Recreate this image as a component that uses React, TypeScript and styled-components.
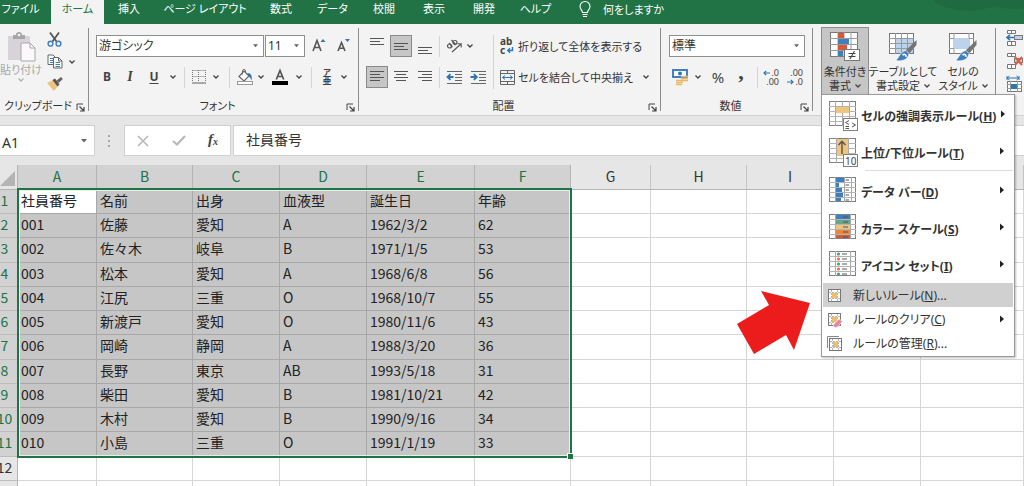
import React from "react";
import styled, { createGlobalStyle } from "styled-components";

const Global = createGlobalStyle`
  *, *::before, *::after { box-sizing: border-box; }
  html, body { margin: 0; padding: 0; }
  body {
    font-family: "Noto Sans", "Noto Sans CJK JP", sans-serif;
    font-feature-settings: "palt";
    font-size: 12px;
    color: #333;
  }
  button, input, select {
    font: inherit;
    font-feature-settings: inherit;
    color: inherit;
    margin: 0;
    padding: 0;
    border: 0;
    background: none;
    border-radius: 0;
  }
  svg { display: block; flex: none; overflow: visible; }
`;

/* ---------- page ---------- */

const Page = styled.div`
  display: flex;
  flex-direction: column;
  height: 100vh;
  overflow: hidden;
  background: #fff;
`;

/* ---------- tabs ---------- */

const TabBar = styled.nav`
  display: flex;
  flex: none;
  height: 24px;
  background: #217346;
  color: #fff;
  font-size: 11px;
`;

const Tab = styled.button<{ $w: number; $active?: boolean }>`
  flex: none;
  width: ${(p) => p.$w}px;
  height: 24px;
  padding-bottom: 6px;
  line-height: 18px;
  text-align: center;
  white-space: nowrap;
  background: ${(p) => (p.$active ? "#f3f3f3" : "transparent")};
  color: ${(p) => (p.$active ? "#217346" : "#fff")};
`;

const FileTab = styled(Tab)`
  padding-right: 10px;
`;

const TellMe = styled.button`
  display: flex;
  align-items: center;
  gap: 12px;
  height: 18px;
  margin-left: 17px;
  white-space: nowrap;
`;

const Swirl = styled.svg`
  margin-left: auto;
`;

/* ---------- ribbon ---------- */

const Ribbon = styled.div`
  display: flex;
  flex: none;
  height: 92px;
  padding-top: 4px;
  background: #f3f3f3;
  border-bottom: 1px solid #d2d2d2;
`;

const Group = styled.section<{ $w?: number }>`
  display: flex;
  flex-direction: column;
  flex: ${(p) => (p.$w ? `0 0 ${p.$w}px` : "1 1 0")};
  min-width: 0;
  height: 83px;
  border-right: ${(p) => (p.$w ? "1px solid #8c8c8c" : "0")};
`;

const Body = styled.div<{ $left: number }>`
  display: flex;
  height: 70px;
  padding: 7px 0 0 ${(p) => p.$left}px;
`;

const Caption = styled.div`
  display: flex;
  height: 13px;
  font-size: 11px;
  line-height: 16px;
  padding-right: 3px;
  white-space: nowrap;
`;

const CaptionText = styled.span`
  flex: 1;
  text-align: center;
`;

const Launcher = styled.button`
  width: 9px;
  height: 9px;
  margin-top: 5px;
`;

const Rows = styled.div`
  display: flex;
  flex-direction: column;
  gap: 9px;
`;

const Row = styled.div<{ $gap?: number }>`
  display: flex;
  align-items: center;
  gap: ${(p) => p.$gap ?? 0}px;
  height: 22px;
`;

const Tool = styled.button<{ $w?: number; $on?: boolean }>`
  display: flex;
  align-items: center;
  justify-content: center;
  flex: none;
  width: ${(p) => p.$w ?? 24}px;
  height: 22px;
  ${(p) =>
    p.$on &&
    `width: 22px; margin: 0 1px; background: #c6c6c6; border: 1px solid #8a8a8a;`}
`;

const Letter = styled.span<{ $italic?: boolean; $under?: boolean }>`
  font-weight: 700;
  font-size: ${(p) => (p.$italic ? 14 : 12)}px;
  line-height: 16px;
  color: #444;
  font-family: ${(p) => (p.$italic ? '"Liberation Serif", serif' : "inherit")};
  font-style: ${(p) => (p.$italic ? "italic" : "normal")};
  text-decoration: ${(p) => (p.$under ? "underline" : "none")};
  text-underline-offset: 2px;
`;

const Rule = styled.span<{ $w: number; $tall?: boolean }>`
  flex: none;
  width: ${(p) => p.$w}px;
  height: ${(p) => (p.$tall ? 54 : 21)}px;
  background: linear-gradient(#d4d4d4, #d4d4d4) center / 1px 100% no-repeat;
`;

const TextTool = styled.button`
  display: flex;
  align-items: center;
  gap: 3px;
  height: 22px;
  padding-left: 3px;
  font-size: 11px;
  white-space: nowrap;
`;

const PickerBox = styled.span<{ $w: number }>`
  position: relative;
  display: flex;
  align-items: center;
  width: ${(p) => p.$w}px;
  height: 22px;
  background: #fff;
  border: 1px solid #8f8f8f;
  select {
    appearance: none;
    width: 100%;
    height: 20px;
    padding-left: 2px;
    line-height: 20px;
    outline: 0;
  }
  svg {
    position: absolute;
    right: 5px;
    pointer-events: none;
  }
`;

const Paste = styled.button`
  display: flex;
  flex-direction: column;
  align-items: center;
  width: 44px;
  height: 62px;
  padding: 0 2px 0 0;
  color: #a8a8a8;
  font-size: 11px;
  line-height: 16px;
  white-space: nowrap;
`;

const PasteBody = styled(Body)`
  padding-top: 4px;
`;

const ClipTools = styled.div`
  display: flex;
  flex-direction: column;
  gap: 7px;
  padding-left: 3px;
`;

const ClipTool = styled.button`
  display: flex;
  align-items: center;
  gap: 6px;
  height: 15px;
`;

const StyleList = styled.div`
  display: flex;
  padding-left: 8px;
  gap: 2px;
`;

const MenuAnchor = styled.div`
  position: relative;
  margin-top: -1px;
`;

const BigButton = styled.button<{ $w: number; $open?: boolean }>`
  display: flex;
  flex-direction: column;
  align-items: center;
  width: ${(p) => p.$w}px;
  height: 68px;
  margin-top: ${(p) => (p.$open ? 0 : -1)}px;
  padding-top: 4px;
  border: 1px solid ${(p) => (p.$open ? "#8f8f8f" : "transparent")};
  background: ${(p) => (p.$open ? "#c6c6c6" : "transparent")};
  font-size: 11px;
  line-height: 14px;
  white-space: nowrap;
`;

const BigLabel = styled.span`
  display: flex;
  flex-direction: column;
  align-items: center;
  margin-top: 3px;
`;

const BigLine = styled.span`
  display: flex;
  align-items: center;
  gap: 4px;
`;

const CellTools = styled.div`
  display: flex;
  flex-direction: column;
  gap: 7px;
  padding: 2px 0 0 10px;
`;

/* ---------- drop-down menu ---------- */

const Menu = styled.ul`
  position: absolute;
  z-index: 3;
  top: 67px;
  left: 0;
  width: 194px;
  margin: 0;
  padding: 1px;
  list-style: none;
  background: #fff;
  border: 1px solid #9a9a9a;
  box-shadow: 1px 1px 2px rgba(0, 0, 0, 0.25);
`;

const Gallery = styled.button`
  display: flex;
  align-items: flex-start;
  width: 100%;
  height: 37px;
  padding: 5px 9px 0 6px;
  gap: 5px;
  font-weight: 700;
  line-height: 28px;
  text-align: left;
  white-space: nowrap;
  > span { flex: 1; padding-top: 2px; }
  > svg:last-child { margin-top: 9px; }
`;

const Command = styled.button<{ $hot?: boolean }>`
  display: flex;
  align-items: center;
  gap: 11px;
  width: 100%;
  height: 24px;
  padding: 0 9px 0 4px;
  text-align: left;
  white-space: nowrap;
  background: ${(p) => (p.$hot ? "#d0d0d0" : "transparent")};
  > span { flex: 1; }
`;

const Divider = styled.li`
  height: 1px;
  margin: 0 0 1px 42px;
  background: #dcdcdc;
`;

const Pointer = styled.svg`
  position: absolute;
  z-index: 4;
  top: 264px;
  right: 100%;
  margin-right: 11px;
`;

/* ---------- formula bar ---------- */

const FormulaRow = styled.div`
  display: flex;
  flex: none;
  align-items: flex-start;
  height: 49px;
  padding-top: 9px;
  background: #e6e6e6;
`;

const NameBox = styled.div`
  display: flex;
  align-items: center;
  width: 95px;
  height: 31px;
  padding: 0 6px 0 2px;
  background: #fff;
  border: 1px solid #d0d0d0;
  border-left: 0;
  input {
    flex: 1;
    min-width: 0;
    padding-top: 3px;
    font-size: 14px;
    outline: 0;
  }
`;

const Grip = styled.svg`
  margin: 10px 14px 0 13px;
`;

const EntryTools = styled.div`
  display: flex;
  align-items: center;
  justify-content: space-between;
  width: 107px;
  height: 31px;
  padding: 0 12px;
  background: #fff;
  border: 1px solid #d0d0d0;
`;

const FxLabel = styled.button`
  font-family: "Liberation Serif", serif;
  font-style: italic;
  font-weight: 700;
  font-size: 15px;
  line-height: 18px;
  color: #444;
  sub { font-size: 10px; vertical-align: -1px; }
`;

const FormulaInput = styled.input`
  flex: 1;
  min-width: 0;
  height: 31px;
  margin-left: 2px;
  padding: 0 12px 4px;
  background: #fff;
  border: 1px solid #d0d0d0;
  border-right: 0;
  font-family: "Noto Sans CJK JP", sans-serif;
  font-feature-settings: normal;
  font-size: 14px;
  outline: 0;
`;

/* ---------- sheet ---------- */

const SheetArea = styled.div`
  position: relative;
  flex: 1;
  min-height: 0;
`;

const Sheet = styled.table`
  width: 100%;
  table-layout: fixed;
  border-collapse: separate;
  border-spacing: 0;
  font-family: "Noto Sans CJK JP", sans-serif;
  font-feature-settings: normal;
  font-size: 14px;
  line-height: 20px;
  tbody tr { height: 24px; vertical-align: top; }
  tbody tr:nth-child(4n + 3) { height: 25px; }
`;

const ColHead = styled.th<{ $sel: boolean }>`
  height: 25px;
  padding: 0 0 2px;
  font-weight: 400;
  background: ${(p) => (p.$sel ? "#d2d2d2" : "#e6e6e6")};
  color: ${(p) => (p.$sel ? "#217346" : "#333")};
  border-right: 1px solid ${(p) => (p.$sel ? "#b4b4b4" : "#c4c4c4")};
  border-bottom: 1px solid #b4b4b4;
`;

const Corner = styled.td`
  padding: 6px 0 0;
  vertical-align: top;
  background: #e6e6e6;
  border-right: 1px solid #b4b4b4;
  border-bottom: 1px solid #b4b4b4;
`;

const RowHead = styled.th<{ $sel: boolean }>`
  padding: 0;
  overflow: hidden;
  font-weight: 400;
  vertical-align: top;
  background: ${(p) => (p.$sel ? "#d2d2d2" : "#e6e6e6")};
  color: ${(p) => (p.$sel ? "#217346" : "#333")};
  border-right: 1px solid #b4b4b4;
  border-bottom: 1px solid #bcbcbc;
  span {
    display: flex;
    justify-content: center;
    width: 9px;
  }
`;

const Cell = styled.td<{ $sel?: boolean; $active?: boolean }>`
  padding: 0 0 0 3px;
  overflow: hidden;
  white-space: nowrap;
  vertical-align: top;
  color: #222;
  background: ${(p) => (p.$active ? "#fff" : p.$sel ? "#c6c6c6" : "#fff")};
  border-right: 1px solid ${(p) => (p.$sel ? "#a8a8a8" : "#d6d6d6")};
  border-bottom: 1px solid ${(p) => (p.$sel ? "#a8a8a8" : "#d6d6d6")};
`;

const Selection = styled.div`
  position: absolute;
  top: 23px;
  left: 17px;
  width: 555px;
  height: 270px;
  border: 2px solid #217346;
  box-shadow: inset 0 0 0 1px #e4efe8;
  pointer-events: none;
  &::after {
    content: "";
    position: absolute;
    right: -3px;
    bottom: -3px;
    width: 6px;
    height: 6px;
    background: #217346;
    border: 1px solid #fff;
    border-right: 0;
    border-bottom: 0;
  }
`;

/* ---------- icons ---------- */

const Chevron = ({ color = "#444" }: { color?: string }) => (
  <svg width="6" height="4" viewBox="0 0 6 4">
    <path d="M0.5 0.5 L3 3 L5.5 0.5" fill="none" stroke={color} strokeWidth="1.3" />
  </svg>
);

const Drop = ({ w = 5 }: { w?: number }) => (
  <svg width={w} height="4" viewBox="0 0 6 4">
    <path d="M0 0 H6 L3 3.6 Z" fill="#666" />
  </svg>
);

const LaunchIcon = () => (
  <svg width="9" height="9" viewBox="0 0 9 9" fill="none" stroke="#444">
    <path d="M1 7 V1 H7" />
    <path d="M3.5 3.5 L7.5 7.5 M8 4 V8 H4" strokeWidth="1.2" />
  </svg>
);

const Lines = ({ widths, top = 0, align = "start" }: { widths: number[]; top?: number; align?: string }) => (
  <svg width="14" height="14" viewBox="0 0 14 14" shapeRendering="crispEdges">
    {widths.map((w, i) => (
      <rect
        key={i}
        x={align === "start" ? 0 : align === "end" ? 14 - w : (14 - w) / 2}
        y={top + i * 3}
        width={w}
        height="1"
        fill="#555"
      />
    ))}
  </svg>
);

const IndentIcon = ({ out }: { out?: boolean }) => (
  <svg width="17" height="14" viewBox="0 0 17 14">
    <path d="M1 1.5H16 M9 4.5H16 M9 7.5H16 M9 10.5H16 M1 13.5H16" stroke="#666" fill="none" />
    <path
      d={out ? "M7.5 7 H2 M4.5 4.2 L1.5 7 L4.5 9.8" : "M0.5 7 H6 M3.8 4.2 L6.8 7 L3.8 9.8"}
      stroke="#2e75b6"
      strokeWidth="1.8"
      fill="none"
    />
  </svg>
);

const PasteIcon = () => (
  <svg width="30" height="30" viewBox="0 0 30 30">
    <rect x="2" y="4" width="22" height="24" fill="#d8d3d8" />
    <path d="M7 7 V3 H10 a3 3 0 0 1 6 0 H19 V7 Z" fill="#a9a5a9" />
    <circle cx="13" cy="3" r="1.3" fill="#f3f3f3" />
    <path d="M15 11 H24 L29 16 V29 H15 Z" fill="#fbf8fb" stroke="#aaa6aa" />
    <path d="M24 11 V16 H29" fill="none" stroke="#aaa6aa" />
  </svg>
);

const CutIcon = () => (
  <svg width="15" height="15" viewBox="0 0 15 15" fill="none">
    <path d="M3 0.5 L9.5 9.5 M12 0.5 L5.5 9.5" stroke="#555" strokeWidth="1.8" />
    <circle cx="3.5" cy="11.7" r="2.4" stroke="#3f7fbf" strokeWidth="1.4" />
    <circle cx="11.5" cy="11.7" r="2.4" stroke="#3f7fbf" strokeWidth="1.4" />
  </svg>
);

const CopyIcon = () => (
  <svg width="16" height="15" viewBox="0 0 16 15">
    <path d="M1 1 H6 L9 4 V10.5 H1 Z" fill="#fff" stroke="#666" />
    <path d="M3 4.5H6 M3 6.5H6 M3 8.5H6" stroke="#3f7fbf" />
    <path d="M6.5 3.5 H11.5 L15 7 V14 H6.5 Z" fill="#fff" stroke="#666" />
    <path d="M11.5 3.5 V7 H15" fill="none" stroke="#666" />
    <path d="M8.5 8.5H13 M8.5 10.5H13 M8.5 12.5H13" stroke="#3f7fbf" />
  </svg>
);

const PainterIcon = () => (
  <svg width="16" height="14" viewBox="0 0 16 14">
    <path d="M0 6 L6 3 L11 9 L7 14 Z" fill="#f0c47c" />
    <path d="M5.5 3 L8 1.5 L12.5 7.5 L10.5 9.5 Z" fill="#555" />
    <path d="M9.5 3.5 L14 0 L15.8 2 L11.8 6 Z" fill="#666" />
  </svg>
);

const GrowIcon = ({ down }: { down?: boolean }) => (
  <svg width="14" height="14" viewBox="0 0 14 14">
    <path
      d={down ? "M1 12 L4.5 3.5 L8 12 M2.3 9.2 H6.7" : "M1 12 L5 1.5 L9 12 M2.5 8.5 H7.5"}
      fill="none"
      stroke="#555"
      strokeWidth="1.6"
    />
    <path d={down ? "M8 0 H13 L10.5 3 Z" : "M8.5 3 L11 0 L13.5 3 Z"} fill="#2e75b6" />
  </svg>
);

const BorderIcon = () => (
  <svg width="14" height="14" viewBox="0 0 14 14" fill="none" stroke="#777">
    <path d="M0.5 0.5 H13.5 M0.5 6.5 H13.5 M0.5 0 V12 M6.5 0 V12 M13.5 0 V12" strokeDasharray="1 1" />
    <path d="M0 13 H14" stroke="#888" strokeWidth="1.4" />
  </svg>
);

const FillIcon = () => (
  <svg width="16" height="16" viewBox="0 0 16 16">
    <path d="M7 2 L12 7 L7 12 L2 7.5 Z" fill="#fff" stroke="#666" strokeWidth="1.2" />
    <path d="M5.5 5.5 V1.5 a1.6 1.6 0 0 1 3 0 V4" fill="none" stroke="#666" />
    <path d="M10.5 4 C14 4 15.5 7 14.5 11.5 C13.5 9 13 8 11.5 7.5 Z" fill="#2e75b6" />
    <rect x="0.5" y="12.5" width="15" height="3" fill="#fff" stroke="#999" />
  </svg>
);

const ColorIcon = () => (
  <svg width="16" height="16" viewBox="0 0 16 16">
    <path d="M4.3 10.5 L8 1.5 L11.7 10.5 M5.6 7.5 H10.4" fill="none" stroke="#555" strokeWidth="1.7" />
    <rect y="12" width="16" height="4" fill="#000" />
  </svg>
);

const Ruby = styled.span`
  display: flex;
  flex-direction: column;
  align-items: center;
  color: #444;
  font-weight: 700;
  font-size: 9px;
  line-height: 10px;
  small { font-size: 8px; line-height: 8px; }
`;

const OrientIcon = () => (
  <svg width="17" height="14" viewBox="0 0 17 14" fill="none" stroke="#555">
    <circle cx="3.5" cy="7" r="2" strokeWidth="1.2" />
    <path d="M3 4 L6.5 8" strokeWidth="1.2" />
    <path d="M5.5 1 L10 6" strokeWidth="1.2" />
    <circle cx="9" cy="3.5" r="2" strokeWidth="1.2" />
    <path d="M6 13 L15 5 M11.5 4.8 H15.2 V8.5" strokeWidth="1.1" />
  </svg>
);

const WrapGlyph = styled.span`
  position: relative;
  width: 15px;
  height: 18px;
  color: #444;
  font-size: 10px;
  font-weight: 700;
  line-height: 9px;
  text-align: left;
  svg { position: absolute; right: 2px; bottom: 2px; }
`;

const MergeIcon = () => (
  <svg width="15" height="15" viewBox="0 0 15 15" fill="none">
    <path d="M0.5 0.5 H14.5 V14.5 H0.5 Z M0.5 3.5 H14.5 M0.5 11.5 H14.5 M7.5 0.5 V3.5 M7.5 11.5 V14.5" stroke="#666" />
    <path d="M2.5 7.5 H12.5 M5 5.5 L2.5 7.5 L5 9.5 M10 5.5 L12.5 7.5 L10 9.5" stroke="#2e75b6" />
  </svg>
);

const MoneyIcon = () => (
  <svg width="17" height="16" viewBox="0 0 17 16">
    <rect x="1" y="1" width="14" height="7" fill="#fff" stroke="#2e75b6" strokeWidth="1.8" />
    <circle cx="8" cy="4.5" r="2" fill="#2e75b6" />
    <path d="M9 7.5 H16 M9 9.5 H16 M9 11.5 H16" stroke="#e8b766" strokeWidth="1.5" />
    <path d="M4 11.5 H11 M4 13.5 H11 M4 15.5 H10" stroke="#e8b766" strokeWidth="1.5" />
  </svg>
);

const Percent = styled.span`
  font-size: 15px;
  line-height: 20px;
  color: #444;
`;

const Comma = styled.span`
  height: 22px;
  font-family: "Liberation Serif", serif;
  font-size: 22px;
  font-weight: 700;
  line-height: 12px;
  color: #444;
`;

const Decimal = styled.span`
  display: flex;
  flex-direction: column;
  color: #444;
  font-size: 9px;
  line-height: 9px;
  width: 16px;
  span { display: flex; justify-content: flex-end; align-items: center; gap: 1px; }
`;

const BlueArrow = ({ right }: { right?: boolean }) => (
  <svg width="7" height="6" viewBox="0 0 7 6" fill="none" stroke="#2e75b6" strokeWidth="1.2">
    <path d={right ? "M0 3 H6 M3.8 0.8 L6 3 L3.8 5.2" : "M7 3 H1 M3.2 0.8 L1 3 L3.2 5.2"} />
  </svg>
);

const CondIcon = () => (
  <svg width="30" height="30" viewBox="0 0 30 30">
    <rect x="0.5" y="0.5" width="27" height="24" fill="#fff" stroke="#777" />
    <path d="M8 0V25 M14 0V25 M21 0V25 M0 6.5H28 M0 12.5H28 M0 18.5H28" stroke="#999" />
    <rect x="8" y="1" width="6" height="5" fill="#d8583a" />
    <rect x="8" y="7" width="11" height="5" fill="#3f7fbf" />
    <rect x="8" y="13" width="9" height="5" fill="#d8583a" />
    <rect x="8" y="19" width="5" height="5" fill="#3f7fbf" />
    <rect x="14.5" y="17.5" width="15" height="11" fill="#fff" stroke="#777" />
    <path d="M18.5 21.5H25.5 M18.5 24.5H25.5 M24.5 19L20 27" stroke="#444" strokeWidth="1.1" />
  </svg>
);

const StyleIcon = ({ single }: { single?: boolean }) => (
  <svg width="30" height="30" viewBox="0 0 30 30">
    <rect x="1.5" y="1.5" width="24" height="20" fill="#fff" stroke="#777" />
    {single ? (
      <>
        <path d="M6 1V22 M21 1V22 M1 6.5H26 M1 16.5H26" stroke="#999" />
        <rect x="6" y="6" width="15" height="11" fill="#bdd3ec" />
      </>
    ) : (
      <>
        <rect x="8" y="7" width="17" height="14" fill="#bdd3ec" />
        <path d="M7.5 1V22 M13.5 1V22 M19.5 1V22 M1 6.5H26 M1 11.5H26 M1 16.5H26" stroke="#999" />
      </>
    )}
    <path d="M28.5 8 V13 L20 23 L16.5 19.5 Z" fill="#757575" />
    <path d="M18 18.5 L21 21.5 C20.5 27 15 30 7.5 28.5 C11 26.5 11.5 19.5 18 18.5 Z" fill="#3f7fbf" stroke="#f3f3f3" strokeWidth="0.8" />
    <path d="M14.5 23 C16.5 21.5 18.5 23 18 25" fill="none" stroke="#fff" strokeWidth="1.6" />
  </svg>
);

const CellIcon = ({ kind }: { kind: "insert" | "delete" | "format" }) => (
  <svg width="17" height="16" viewBox="0 0 17 16" fill="none">
    {kind === "format" ? (
      <>
        <path d="M1 2H13 M3.5 0L1 2L3.5 4 M10.5 0L13 2L10.5 4 M1 0V4 M13 0V4" stroke="#2e75b6" />
        <rect x="1.5" y="5.5" width="14" height="10" fill="#fff" stroke="#777" />
        <path d="M4.5 5V16 M11.5 5V16 M1 8.5H16 M1 12.5H16" stroke="#999" />
        <rect x="5" y="8" width="6" height="5" fill="#2e75b6" />
      </>
    ) : (
      <>
        <path d="M1.5 0.5H9.5V3.5H1.5Z M5.5 0.5V3.5 M1.5 11.5H9.5V15.5H1.5Z M5.5 11.5V15.5" fill="#fff" stroke="#777" />
        <rect x="8.5" y="5.5" width="8" height="4" fill="#bdd3ec" stroke="#777" />
        {kind === "insert" ? (
          <path d="M8 7.5H1 M4 4.8L1 7.5L4 10.2" stroke="#2e75b6" strokeWidth="1.6" />
        ) : (
          <path d="M9 4L16 12 M16 4L9 12" stroke="#e05a3c" strokeWidth="2" />
        )}
      </>
    )}
  </svg>
);

const MiniGrid = ({ children, cols = [7, 20] }: { children?: React.ReactNode; cols?: number[] }) => (
  <>
    <rect x="0.5" y="0.5" width="26" height="24" fill="#fff" stroke="#808080" />
    {cols.map((x) => (
      <path key={x} d={`M${x}.5 0V25`} stroke="#a8a8a8" />
    ))}
    <path d="M0 5.5H27 M0 10.5H27 M0 15.5H27 M0 20.5H27" stroke="#b4b4b4" />
    {children}
  </>
);

const galleryArt: Record<string, React.ReactNode> = {
  H: (
    <MiniGrid cols={[6, 13, 20]}>
      <rect x="7" y="6" width="13" height="6" fill="#efc47c" />
      <rect x="14.5" y="17.5" width="14" height="12" fill="#fff" stroke="#808080" />
      <path d="M20 19.5L16.5 21.5L20 23.5 M16.5 25.5H20 M23 22L26.5 24L23 26 M16.5 27.5H20" fill="none" stroke="#555" />
    </MiniGrid>
  ),
  T: (
    <MiniGrid cols={[7, 19]}>
      <rect x="8" y="1" width="11" height="17" fill="#efc47c" />
      <path d="M13 16V3.5 M9.5 7L13 3.2L16.5 7" fill="none" stroke="#555" strokeWidth="1.4" />
      <rect x="14.5" y="16.5" width="14" height="12" fill="#fff" stroke="#808080" />
      <text x="16" y="26.5" fontSize="10" fontWeight="400" fill="#444">10</text>
    </MiniGrid>
  ),
  D: (
    <MiniGrid cols={[6, 15, 22]}>
      <path d="M7 1H15V5H7Z M7 6H10V10H7Z M7 11H13V15H7Z M7 16H14V20H7Z M7 21H12V24H7Z" fill="#3f7fbf" />
      <path d="M16.5 3H20 M16.5 8H20 M16.5 13H20 M16.5 18H20 M16.5 23H20" stroke="#555" />
    </MiniGrid>
  ),
  S: (
    <MiniGrid cols={[6, 21]}>
      <rect x="7" y="1" width="14" height="4" fill="#3f7fbf" />
      <rect x="7" y="6" width="14" height="4" fill="#6aa58a" />
      <rect x="7" y="11" width="14" height="4" fill="#efc47c" />
      <rect x="7" y="16" width="14" height="4" fill="#e8883c" />
      <rect x="7" y="21" width="14" height="3" fill="#d8583a" />
      <path d="M14 3H19 M14 8H19 M14 13H19 M14 18H19 M14 23H19" stroke="#555" />
    </MiniGrid>
  ),
  I: (
    <MiniGrid cols={[6, 21]}>
      {["#4d9c80", "#e8743c", "#4d9c80", "#e8743c", "#4d9c80"].map((c, i) => (
        <circle key={i} cx="9.5" cy={3 + i * 5} r="1.6" fill={c} />
      ))}
      <path d="M13 3H18 M13 8H18 M13 13H18 M13 18H18 M13 23H18" stroke="#555" />
    </MiniGrid>
  ),
};

const RuleIcon = ({ kind }: { kind: "new" | "clear" | "manage" }) => (
  <svg width="15" height="15" viewBox="0 0 15 15">
    {kind === "manage" && <path d="M0.5 12V0.5H12" fill="none" stroke="#888" />}
    <g transform={kind === "manage" ? "translate(2 2)" : "translate(1 1)"}>
      <rect x="0.5" y="0.5" width="12" height="12" fill="#fff" stroke="#777" />
      <path d="M3.5 1V12 M9.5 1V12 M1 3.5H12 M1 9.5H12" stroke="#b4b4b4" strokeDasharray="2 1" />
      <rect x="4" y="4" width="5" height="5" fill="#efbe6c" />
    </g>
    {kind === "clear" && <path d="M6 13 L12 7 L15.5 9.5 L10 15.5 H7.5 Z" fill="#e887a0" stroke="#fff" strokeWidth="0.6" />}
  </svg>
);

const MoreArrow = () => (
  <svg width="4" height="8" viewBox="0 0 4 8">
    <path d="M0 0.5 L4 4 L0 7.5 Z" fill="#222" />
  </svg>
);

/* ---------- data ---------- */

const tabs: [string, number][] = [
  ["挿入", 50],
  ["ページ レイアウト", 102],
  ["数式", 50],
  ["データ", 53],
  ["校閲", 50],
  ["表示", 50],
  ["開発", 50],
  ["ヘルプ", 53],
];

const columns: [string, number?][] = [
  ["A", 79],
  ["B", 96],
  ["C", 87],
  ["D", 87],
  ["E", 108],
  ["F", 96],
  ["G", 80],
  ["H", 96],
  ["I", 87],
  ["J", 87],
  ["K"],
];

const records = [
  ["社員番号", "名前", "出身", "血液型", "誕生日", "年齢"],
  ["001", "佐藤", "愛知", "A", "1962/3/2", "62"],
  ["002", "佐々木", "岐阜", "B", "1971/1/5", "53"],
  ["003", "松本", "愛知", "A", "1968/6/8", "56"],
  ["004", "江尻", "三重", "O", "1968/10/7", "55"],
  ["005", "新渡戸", "愛知", "O", "1980/11/6", "43"],
  ["006", "岡崎", "静岡", "A", "1988/3/20", "36"],
  ["007", "長野", "東京", "AB", "1993/5/18", "31"],
  ["008", "柴田", "愛知", "B", "1981/10/21", "42"],
  ["009", "木村", "愛知", "B", "1990/9/16", "34"],
  ["010", "小島", "三重", "O", "1991/1/19", "33"],
  [],
  [],
];

const galleries: [string, string][] = [
  ["セルの強調表示ルール", "H"],
  ["上位/下位ルール", "T"],
  ["データ バー", "D"],
  ["カラー スケール", "S"],
  ["アイコン セット", "I"],
];

/* ---------- parts ---------- */

const Picker = ({ w, label, value }: { w: number; label: string; value: string }) => (
  <PickerBox $w={w}>
    <select aria-label={label} defaultValue={value}>
      <option>{value}</option>
    </select>
    <Drop />
  </PickerBox>
);

const GroupCaption = ({ children, launcher = true }: { children?: React.ReactNode; launcher?: boolean }) => (
  <Caption>
    <CaptionText>{children}</CaptionText>
    {launcher && (
      <Launcher aria-label="詳細">
        <LaunchIcon />
      </Launcher>
    )}
  </Caption>
);

const More = ({ w = 14 }: { w?: number }) => (
  <Tool $w={w} aria-label="その他">
    <Chevron />
  </Tool>
);

const RulesMenu = () => (
  <Menu>
    {galleries.map(([text, key]) => (
      <React.Fragment key={key}>
        {key === "D" && <Divider />}
        <li>
          <Gallery>
            <svg width="27" height="25" viewBox="0 0 27 25">
              {galleryArt[key]}
            </svg>
            <span>
              {text}(<u>{key}</u>)
            </span>
            <MoreArrow />
          </Gallery>
        </li>
      </React.Fragment>
    ))}
    <li>
      <Command $hot>
        <RuleIcon kind="new" />
        <span>新しいルール(<u>N</u>)...</span>
      </Command>
    </li>
    <li>
      <Command>
        <RuleIcon kind="clear" />
        <span>ルールのクリア(<u>C</u>)</span>
        <MoreArrow />
      </Command>
    </li>
    <li>
      <Command>
        <RuleIcon kind="manage" />
        <span>ルールの管理(<u>R</u>)...</span>
      </Command>
    </li>
  </Menu>
);

export default function App() {
  return (
    <Page>
      <Global />
      <TabBar>
        <FileTab $w={51}>ファイル</FileTab>
        <Tab $w={53} $active>ホーム</Tab>
        {tabs.map(([name, w]) => (
          <Tab key={name} $w={w}>{name}</Tab>
        ))}
        <TellMe>
          <svg width="12" height="17" viewBox="0 0 12 17" fill="none" stroke="#fff">
            <path d="M3.5 11.5 C3.5 9 1 8.5 1 5.5 a5 5 0 0 1 10 0 C11 8.5 8.5 9 8.5 11.5 Z M3.5 13.5 H8.5 M4 15.5 H8" strokeWidth="1.1" />
          </svg>
          何をしますか
        </TellMe>
        <Swirl width="90" height="12" viewBox="0 0 90 12">
          <path d="M0 0 H90 V8 C74 12 64 4 50 9 C34 13 14 10 0 2 Z" fill="#1f6a40" />
        </Swirl>
      </TabBar>

      <Ribbon>
        <Group $w={89}>
          <PasteBody $left={0}>
            <Paste>
              <PasteIcon />
              貼り付け
              <Chevron color="#b0b0b0" />
            </Paste>
            <ClipTools>
              <ClipTool aria-label="切り取り"><CutIcon /></ClipTool>
              <ClipTool aria-label="コピー"><CopyIcon /><Chevron /></ClipTool>
              <ClipTool aria-label="書式のコピー"><PainterIcon /></ClipTool>
            </ClipTools>
          </PasteBody>
          <GroupCaption>クリップボード</GroupCaption>
        </Group>

        <Group $w={270}>
          <Body $left={7}>
            <Rows>
              <Row $gap={1}>
                <Picker w={168} label="フォント" value="游ゴシック" />
                <Picker w={40} label="フォント サイズ" value="11" />
                <Tool $w={26} aria-label="拡大"><GrowIcon /></Tool>
                <Tool $w={22} aria-label="縮小"><GrowIcon down /></Tool>
              </Row>
              <Row>
                <Tool $w={22}><Letter>B</Letter></Tool>
                <Tool><Letter $italic>I</Letter></Tool>
                <Tool><Letter $under>U</Letter></Tool>
                <More />
                <Rule $w={9} />
                <Tool $w={20} aria-label="罫線"><BorderIcon /></Tool>
                <More />
                <Rule $w={13} />
                <Tool $w={18} aria-label="塗りつぶし"><FillIcon /></Tool>
                <More />
                <Tool aria-label="文字の色"><ColorIcon /></Tool>
                <More />
                <Rule $w={11} />
                <Tool $w={20}><Ruby><small>ア</small>亜</Ruby></Tool>
                <More />
              </Row>
            </Rows>
          </Body>
          <GroupCaption>フォント</GroupCaption>
        </Group>

        <Group $w={302}>
          <Body $left={6}>
            <Rows>
              <Row>
                <Tool aria-label="上揃え"><Lines widths={[14, 10, 14]} top={-1} /></Tool>
                <Tool $on aria-label="上下中央揃え"><Lines widths={[14, 10, 14]} top={4} /></Tool>
                <Tool aria-label="下揃え"><Lines widths={[14, 10, 14]} top={8} /></Tool>
                <Rule $w={5} />
                <Tool aria-label="方向"><OrientIcon /></Tool>
                <More w={8} />
              </Row>
              <Row>
                <Tool $on aria-label="左揃え"><Lines widths={[14, 10, 14, 10]} top={1} /></Tool>
                <Tool aria-label="中央揃え"><Lines widths={[14, 10, 14, 10]} top={1} align="mid" /></Tool>
                <Tool aria-label="右揃え"><Lines widths={[14, 10, 14, 10]} top={1} align="end" /></Tool>
                <Rule $w={5} />
                <Tool aria-label="インデントを減らす"><IndentIcon out /></Tool>
                <Tool aria-label="インデントを増やす"><IndentIcon /></Tool>
              </Row>
            </Rows>
            <Rule $w={7} $tall />
            <Rows>
              <TextTool>
                <WrapGlyph>
                  ab<br />c
                  <svg width="6" height="6" viewBox="0 0 6 6" fill="none" stroke="#2e75b6" strokeWidth="1.4">
                    <path d="M5.5 0V3.5H1 M3 1.2L0.8 3.5L3 5.8" />
                  </svg>
                </WrapGlyph>
                折り返して全体を表示する
              </TextTool>
              <Row>
                <TextTool>
                  <MergeIcon />
                  セルを結合して中央揃え
                </TextTool>
                <More w={26} />
              </Row>
            </Rows>
          </Body>
          <GroupCaption>配置</GroupCaption>
        </Group>

        <Group $w={152}>
          <Body $left={8}>
            <Rows>
              <Picker w={136} label="表示形式" value="標準" />
              <Row>
                <Tool $w={22} aria-label="通貨"><MoneyIcon /></Tool>
                <More />
                <Tool $w={26}><Percent>%</Percent></Tool>
                <Tool $w={20}><Comma>,</Comma></Tool>
                <Rule $w={12} />
                <Tool $w={16}>
                  <Decimal><span><BlueArrow />.0</span><span>.00</span></Decimal>
                </Tool>
                <Tool $w={32}>
                  <Decimal><span>.00</span><span><BlueArrow right />.0</span></Decimal>
                </Tool>
              </Row>
            </Rows>
          </Body>
          <GroupCaption>数値</GroupCaption>
        </Group>

        <Group $w={183}>
          <StyleList>
            <MenuAnchor>
              <BigButton $w={48} $open>
                <CondIcon />
                <BigLabel>
                  条件付き
                  <BigLine>書式<Chevron /></BigLine>
                </BigLabel>
              </BigButton>
              <RulesMenu />
              <Pointer width="74" height="64" viewBox="736 291 74 64">
                <path d="M810 303 L761 291 L769 305 L737 324 L754 354 L786 335 L794 350 Z" fill="#ed1c1c" />
              </Pointer>
            </MenuAnchor>
            <BigButton $w={64}>
              <StyleIcon />
              <BigLabel>
                テーブルとして
                <BigLine>書式設定<Chevron /></BigLine>
              </BigLabel>
            </BigButton>
            <BigButton $w={52}>
              <StyleIcon single />
              <BigLabel>
                セルの
                <BigLine>スタイル<Chevron /></BigLine>
              </BigLabel>
            </BigButton>
          </StyleList>
        </Group>

        <Group>
          <CellTools>
            <CellIcon kind="insert" />
            <CellIcon kind="delete" />
            <CellIcon kind="format" />
          </CellTools>
        </Group>
      </Ribbon>

      <FormulaRow>
        <NameBox>
          <input aria-label="名前ボックス" defaultValue="A1" />
          <Drop w={8} />
        </NameBox>
        <Grip width="2" height="12" viewBox="0 0 2 12">
          <path d="M0 0H2V2H0Z M0 5H2V7H0Z M0 10H2V12H0Z" fill="#a8a8a8" />
        </Grip>
        <EntryTools>
          <svg width="12" height="12" viewBox="0 0 12 12">
            <path d="M1 1L11 11 M11 1L1 11" stroke="#b8b8b8" strokeWidth="1.6" />
          </svg>
          <svg width="14" height="11" viewBox="0 0 14 11">
            <path d="M1 6L5 9.5L13 1" fill="none" stroke="#b8b8b8" strokeWidth="2.2" />
          </svg>
          <FxLabel>
            f<sub>x</sub>
          </FxLabel>
        </EntryTools>
        <FormulaInput aria-label="数式バー" defaultValue="社員番号" />
      </FormulaRow>

      <SheetArea>
        <Sheet>
          <colgroup>
            <col width={18} />
            {columns.map(([c, w]) => (
              <col key={c} width={w} />
            ))}
          </colgroup>
          <thead>
            <tr>
              <Corner>
                <svg width="15" height="15" viewBox="0 0 15 15">
                  <path d="M15 0V15H0Z" fill="#b4b4b4" />
                </svg>
              </Corner>
              {columns.map(([c], i) => (
                <ColHead key={c} scope="col" $sel={i < 6}>{c}</ColHead>
              ))}
            </tr>
          </thead>
          <tbody>
            {records.map((record, r) => (
              <tr key={r}>
                <RowHead scope="row" $sel={r < 11}>
                  <span>{r + 1}</span>
                </RowHead>
                {columns.map(([c], i) => (
                  <Cell key={c} $sel={r < 11 && i < 6} $active={r === 0 && i === 0}>
                    {record[i]}
                  </Cell>
                ))}
              </tr>
            ))}
          </tbody>
        </Sheet>
        <Selection />
      </SheetArea>
    </Page>
  );
}
